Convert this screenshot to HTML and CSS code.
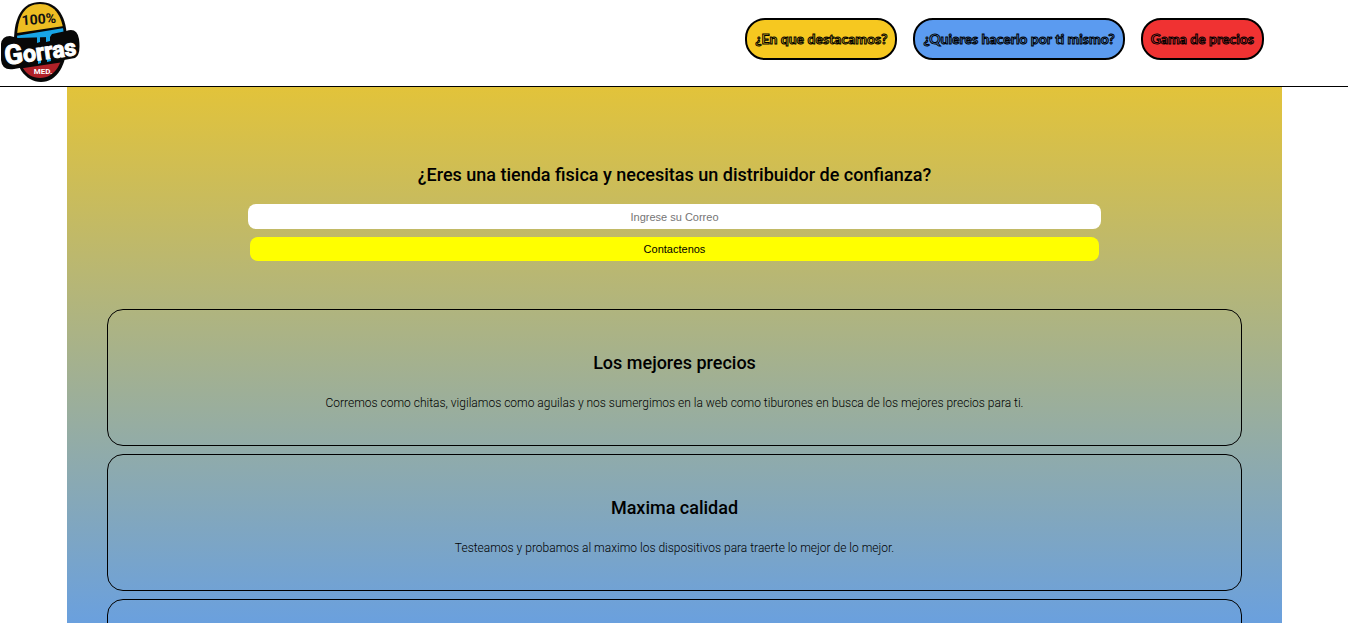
FILE: index.html
```html
<!DOCTYPE html>
<html lang="es">
<head>
<meta charset="utf-8">
<title>Gorras Med</title>
<link rel="stylesheet" href="styles.css">
</head>
<body>
<header class="header">
  <a class="logo" href="#" aria-label="100% Gorras Med">
    <svg viewBox="0 0 80 80" width="80" height="80">
      <defs><clipPath id="badge"><path d="M40 2C55 2 64 15 64 38S55 76 40 76S17 62 17 38S25 2 40 2Z"/></clipPath></defs>
      <path d="M40 0C58 0 67 15 67 39S57 80 41 80S14 64 14 39S23 0 40 0Z" fill="#080808"/>
      <g clip-path="url(#badge)">
        <path d="M10 0H70V23L10 32Z" fill="#edbd22"/>
        <path d="M10 35L70 25V56L10 60Z" fill="#18a5e6"/>
        <path d="M10 68L70 59V80H10Z" fill="#b02128"/>
      </g>
      <path d="M1 42Q2 34 10 34L18 36L50 35L52 32L66 29Q77 25 79 37Q81 53 75 56L14 67Q2 69 1 58Z" fill="#080808"/>
      <path d="M37 35H40V40L37 41ZM46 34H50V39L46 40ZM38 58L41 57V61L38 62ZM47 57L51 56V59L47 60Z" fill="#18a5e6"/>
      <text class="logo-top" x="39" y="22" transform="rotate(-4 39 20)">100%</text>
      <text class="logo-name" x="40" y="58" transform="rotate(-8 40 48)"><tspan class="logo-initial">G</tspan>orras</text>
      <text class="logo-foot" x="43" y="72">MED.</text>
    </svg>
  </a>
  <nav class="nav">
    <a class="pill pill-yellow" href="#destacamos">¿En que destacamos?</a>
    <a class="pill pill-blue" href="#hazlo">¿Quieres hacerlo por ti mismo?</a>
    <a class="pill pill-red" href="#precios">Gama de precios</a>
  </nav>
</header>
<main class="main">
  <form class="contact">
    <h2 class="title"><label for="correo">¿Eres una tienda fisica y necesitas un distribuidor de confianza?</label></h2>
    <input class="email" id="correo" type="email" placeholder="Ingrese su Correo">
    <button class="send" type="button">Contactenos</button>
  </form>
  <section class="cards" id="destacamos">
    <article class="card">
      <h2 class="title">Los mejores precios</h2>
      <p class="text">Corremos como chitas, vigilamos como aguilas y nos sumergimos en la web como tiburones en busca de los mejores precios para ti.</p>
    </article>
    <article class="card">
      <h2 class="title">Maxima calidad</h2>
      <p class="text">Testeamos y probamos al maximo los dispositivos para traerte lo mejor de lo mejor.</p>
    </article>
    <article class="card"></article>
  </section>
</main>
</body>
</html>
```
FILE: styles.css
```css
* { box-sizing: border-box; }
body {
  margin: 0;
  height: 100vh;
  overflow: hidden;
  display: flex;
  flex-direction: column;
  background: #fff;
  color: #000;
  font-family: Roboto, sans-serif;
}
.header {
  flex: none;
  display: flex;
  justify-content: space-between;
  align-items: flex-start;
  padding: 2px 84px 4px 0;
  border-bottom: 1px solid #000;
}
.logo, .logo svg { display: block; }
.logo text { text-anchor: middle; font-weight: 700; }
.logo-top { font-family: Roboto, sans-serif; font-size: 14px; fill: #111; }
.logo-name {
  font-family: Roboto, sans-serif;
  font-size: 23px;
  fill: #fff;
  stroke: #fff;
  stroke-width: 1px;
}
.logo-initial { font-size: 27px; }
.logo-foot { font-family: Roboto, sans-serif; font-size: 8px; fill: #fff; }
.nav { display: flex; gap: 16px; padding-top: 16px; }
.pill {
  padding: 10px 8px;
  border: 2px solid #000;
  border-radius: 20px;
  font-family: Lato, sans-serif;
  font-size: 14px;
  line-height: 18px;
  font-weight: 700;
  text-decoration: none;
  -webkit-text-stroke: 1px #000;
}
.pill-yellow { background: #f6c820; color: #f6c820; }
.pill-blue { background: #5b9bf0; color: #5b9bf0; }
.pill-red { background: #f03232; color: #f03232; }
.main {
  flex: 1;
  min-height: 0;
  margin: 0 66px 0 67px;
  padding: 72px 40px 0;
  background: linear-gradient(#e2c33a, #6aa0de);
  text-align: center;
}
.contact {
  display: flex;
  flex-direction: column;
  align-items: center;
  padding-bottom: 48px;
}
.title { margin: 0; font-size: 18px; line-height: 32px; font-weight: 500; }
.email, .send {
  height: 25px;
  border: 0;
  border-radius: 8px;
  font-family: "Liberation Sans", Arial, sans-serif;
  font-size: 11px;
  text-align: center;
}
.email { width: calc(75% + 2px); margin: 13px 0 8px; background: #fff; }
.email::placeholder { color: #757575; }
.send { width: calc(75% - 2px); height: 24px; background: #ff0; color: #000; }
.cards { display: flex; flex-direction: column; gap: 8px; }
.card {
  min-height: 137px;
  padding: 37px 20px 32px;
  border: 1px solid #000;
  border-radius: 16px;
}
.text { margin: 14px 0 0; font-size: 12px; line-height: 20px; font-weight: 300; }
```
